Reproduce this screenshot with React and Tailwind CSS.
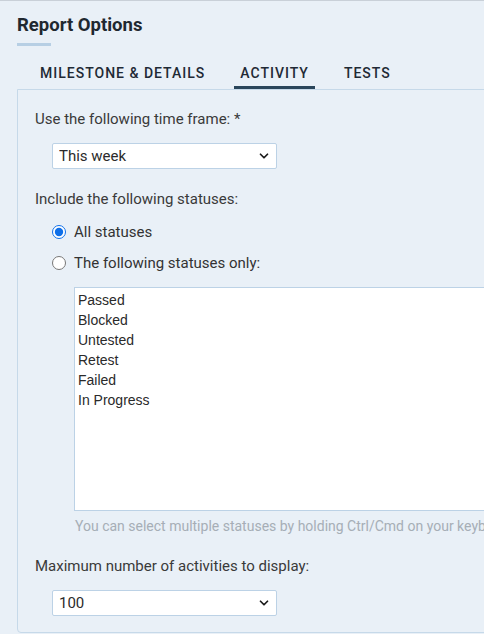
import { ChevronDown } from "lucide-react";

// ===== STATIC DATA =====
const STATUSES = ["Passed", "Blocked", "Untested", "Retest", "Failed", "In Progress"];
const TABS = [
  { label: "MILESTONE & DETAILS", active: false },
  { label: "ACTIVITY", active: true },
  { label: "TESTS", active: false },
];

function Dropdown({ value }) {
  return (
    <div className="relative ml-[17px] w-[225px]">
      <select
        defaultValue={value}
        className="h-[26px] w-full appearance-none rounded-[2px] border border-[#bcd2e6] bg-white pl-[6px] text-[15px] text-[#2b2b2b] outline-none"
      >
        <option>{value}</option>
      </select>
      <ChevronDown
        size={14}
        strokeWidth={3}
        className="pointer-events-none absolute right-[6px] top-[6px] text-[#1b1b1b]"
      />
    </div>
  );
}

export default function App() {
  return (
    <div
      className="h-[634px] w-[484px] overflow-hidden border-t border-[#c9d0d8] bg-[#e9f0f7] text-[#333]"
      style={{ fontFamily: "Roboto, 'Liberation Sans', sans-serif" }}
    >
      {/* ===== PAGE HEADER ===== */}
      <div className="pl-[17px] pt-[12px]">
        <h2 className="text-[18.5px] font-bold leading-[24px] text-[#1f2830]">Report Options</h2>
        <div className="mt-[6px] h-[3px] w-[34px] bg-[#b7cfe4]" />
      </div>

      {/* ===== TABS ===== */}
      <div className="mt-[17px] flex gap-[23px] pl-[34px]">
        {TABS.map((tab) => (
          <div
            key={tab.label}
            className={`border-b-[3px] px-[6px] pb-[3px] text-[14px] font-medium leading-[20px] tracking-[1px] text-[#1f2a35] ${
              tab.active ? "border-[#2a465b]" : "border-transparent"
            }`}
          >
            {tab.label}
          </div>
        ))}
      </div>

      {/* ===== PANEL ===== */}
      <div className="ml-[17px] w-[640px] rounded-bl-[4px] border border-[#c6d9e9] px-[17px] pb-[16px] pt-[19px] text-[15px] leading-[20px]">
        <div className="text-[#3a3a3a]">Use the following time frame: *</div>
        <div className="mt-[14px]">
          <Dropdown value="This week" />
        </div>

        <div className="mt-[20px] text-[#3a3a3a]">Include the following statuses:</div>
        <label className="ml-[17px] mt-[13px] flex items-center gap-[8px]">
          <input type="radio" name="statuses" defaultChecked className="m-0 h-[14px] w-[14px] accent-[#0f6fe8]" />
          <span>All statuses</span>
        </label>
        <label className="ml-[17px] mt-[11px] flex items-center gap-[8px]">
          <input type="radio" name="statuses" className="m-0 h-[14px] w-[14px]" />
          <span>The following statuses only:</span>
        </label>

        <div
          className="ml-[39px] mt-[14px] h-[224px] w-[460px] border border-[#bcd2e6] bg-white px-[3px] pt-[2px] text-[14px] leading-[20px] text-[#2a2a2a]"
          style={{ fontFamily: "'Liberation Sans', Arial, sans-serif" }}
        >
          {STATUSES.map((status) => (
            <div key={status}>{status}</div>
          ))}
        </div>
        <div className="ml-[40px] mt-[6px] whitespace-nowrap text-[14px] leading-[18px] text-[#a6aeb6]">
          You can select multiple statuses by holding Ctrl/Cmd on your keyboard.
        </div>

        <div className="mt-[21px] text-[#3a3a3a]">Maximum number of activities to display:</div>
        <div className="mt-[14px]">
          <Dropdown value="100" />
        </div>
      </div>
    </div>
  );
}
